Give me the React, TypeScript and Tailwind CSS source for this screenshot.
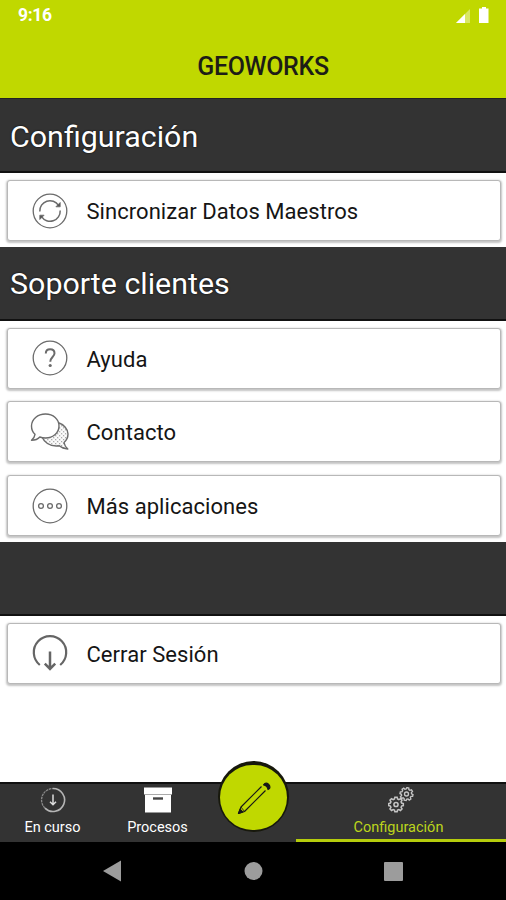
import type { ReactNode } from 'react';

function SyncIcon() {
  return (
    <svg viewBox="0 0 40 40" className="w-10 h-10" fill="none" stroke="#6b6b6b" strokeWidth="1.3">
      <circle cx="20" cy="20" r="16.8" />
      <path d="M9.8 20.5A10.2 10.2 0 0 1 28.5 14.3M30.2 19.5A10.2 10.2 0 0 1 11.5 25.7" strokeWidth="1.5" />
      <path d="M30.2 11.500v4.300h-4.300zM9.800 28.500v-4.300h4.300z" fill="#555" strokeWidth="0.8" />
    </svg>
  );
}

function HelpIcon() {
  return (
    <svg viewBox="0 0 40 40" className="w-10 h-10" fill="none" stroke="#6b6b6b" strokeWidth="1.3">
      <circle cx="20" cy="20" r="16.8" />
      <path d="M15.8 15.5c0-2.8 1.8-4.3 4.3-4.3s4.4 1.6 4.4 4.1c0 3.6-4.2 4-4.2 8.4" strokeWidth="2" />
      <circle cx="20.2" cy="27.5" r="1.6" fill="#6b6b6b" stroke="none" />
    </svg>
  );
}

function ChatIcon() {
  return (
    <svg viewBox="0 0 40 40" className="w-10 h-10" fill="none" stroke="#6b6b6b" strokeWidth="1.4" strokeLinejoin="round">
      <defs>
        <pattern id="dots" width="2.8" height="2.8" patternUnits="userSpaceOnUse" patternTransform="rotate(45)">
          <circle cx="1.4" cy="1.4" r="0.7" fill="#888" stroke="none" />
        </pattern>
      </defs>
      <path d="M28 10.5c6 2 10 6.700 10 11.500 0 3.600-1.500 6.400-4 8.500.4 2.500 1.700 4.500 3.800 6.500-3.500-.2-6.400-1.300-8.500-3.200-8 1-14.500-2.500-17.800-9.500z" fill="url(#dots)" />
      <path d="M15.5 2c7.800 0 13.500 5.200 13.500 12s-5.700 12-13.500 12c-2 0-4-.3-5.700-1-2 2.300-5 3.300-8.300 3.300 2-1.700 3.200-3.600 3.500-6-2.300-2-3.500-4.900-3.500-8.300 0-6.800 6.200-12 14-12z" fill="#fff" />
    </svg>
  );
}

function MoreIcon() {
  return (
    <svg viewBox="0 0 40 40" className="w-10 h-10" fill="none" stroke="#6b6b6b" strokeWidth="1.3">
      <circle cx="20" cy="20" r="16.8" />
      <circle cx="11" cy="20" r="2.4" />
      <circle cx="20" cy="20" r="2.4" />
      <circle cx="29" cy="20" r="2.4" />
    </svg>
  );
}

function LogoutIcon() {
  return (
    <svg viewBox="0 0 40 40" className="w-10 h-10" fill="none" stroke="#656565" strokeWidth="2.2">
      <path d="M9.8 32A16.2 16.2 0 1 1 30.2 32" />
      <path d="M20 18.5v17M14.8 30.7l5.2 5.300 5.200-5.300" strokeWidth="2.5" />
    </svg>
  );
}

function DownloadIcon() {
  return (
    <svg viewBox="0 0 26 26" className="w-[26px] h-[26px]" fill="none" stroke="#b5b5b5">
      <path d="M13 1.5a11.5 11.5 0 1 1-8.1 19.6" strokeWidth="1.6" />
      <path d="M4.9 21.1A11.5 11.5 0 0 1 13 1.5" strokeWidth="1.3" strokeDasharray="2.5 .7" stroke="#8b8b8b" />
      <path d="M13 7.5v10M10 14.8l3 3 3-3" stroke="#ddd" strokeWidth="1.5" />
    </svg>
  );
}

function BoxIcon() {
  return (
    <svg viewBox="0 0 30 26" className="w-[30px] h-[26px]">
      <path d="M1 .5h28v7H1z" fill="#fff" />
      <path d="M2 8h26v17.5H2z" fill="#fff" />
      <path d="M2 7.5h26" stroke="#aaa" />
      <path d="M10 11.5h10" stroke="#444" strokeWidth="2.4" />
    </svg>
  );
}

const gear = 'M-1.3-7.5h2.6l.5 2 1.5.7 1.900-1.100 1.800 1.800-1.100 1.900.6 1.500 2 .5v2.400l-2 .5-.6 1.500 1.100 1.900-1.800 1.800-1.900-1.100-1.500.6-.5 2h-2.600l-.5-2-1.500-.6-1.900 1.100-1.800-1.800 1.100-1.900-.6-1.500-2-.5v-2.400l2-.5.6-1.500-1.100-1.900 1.800-1.800 1.900 1.100 1.500-.7z';

function GearsIcon() {
  return (
    <svg viewBox="0 0 26 26" className="ml-1 w-[26px] h-[26px]" fill="none" stroke="#c4c4c4" strokeWidth="1.8">
      <g transform="translate(8 17.5) scale(.86)">
        <path d={gear} transform="translate(0 -.9)" />
        <circle r="2.4" />
      </g>
      <g transform="translate(18.500 7) scale(.76)">
        <path d={gear} transform="rotate(12) translate(0 -.9)" />
        <circle r="2.6" />
      </g>
    </svg>
  );
}

function PencilIcon() {
  return (
    <svg viewBox="0 0 34 34" className="w-[34px] h-[34px]" fill="none" stroke="#171717" strokeWidth="1.2" strokeLinejoin="round">
      <path d="M24.5 5.500L4 26 1.500 32.500l6-2L28.500 9.500" />
      <path d="M27.5 2.800c2.500-1.800 6.500 1.600 5 4.700l-1.500 1c-.4-2.500-2-4.300-4.500-4.700z" fill="#171717" />
      <path d="M3.200 28.300l-1.700 4.200 4.200-1.500z" fill="#171717" />
      <path d="M4 26l3.500 4.500" strokeWidth="0.8" />
    </svg>
  );
}

function Section({ title }: { title?: string }) {
  return (
    <div className="h-[74px] shrink-0 bg-[#333333] border-b-2 border-[#111111] px-2.5 flex items-center">
      {title && <h2 className="text-[30.4px] leading-none text-white pt-1 [text-shadow:0_0_2px_#000]">{title}</h2>}
    </div>
  );
}

function Row({ icon, label }: { icon: ReactNode; label: string }) {
  return (
    <div className="h-[73.7px] shrink-0 pt-[7px] pl-[7px] pr-[5px]">
      <button className="w-full h-[61px] bg-white border border-[#b8b8b8] rounded-[3px] shadow-[0_1px_2px_1px_#c4c4c4] flex items-center gap-[17px] pl-[21.5px]">
        {icon}
        <span className="text-[22px] tracking-[0.05px] leading-none text-[#151515] pt-[3px]">{label}</span>
      </button>
    </div>
  );
}

export default function App() {
  return (
    <div className="w-[506px] h-[900px] overflow-hidden bg-white flex flex-col font-[Roboto,sans-serif]">
      {/* Header */}
      <header className="h-[99px] shrink-0 bg-[#c0d800] border-b border-[#222222]">
        <div className="h-8 flex items-center justify-between pl-[18px] pr-4">
          <span className="text-[17.5px] tracking-[-0.3px] font-bold text-white leading-none">9:16</span>
          <svg viewBox="0 0 36 18" className="w-9 h-[18px]">
            <path d="M2 16L16 2v14z" fill="#fff" opacity=".4" />
            <path d="M2 16l9-9v9z" fill="#fff" />
            <path d="M28 0h4v1.5h2.500V16H25V1.500h3z" fill="#fff" />
          </svg>
        </div>
        <h1 className="pt-[22px] pl-5 text-center text-[25px] tracking-[-0.35px] leading-none font-medium text-[#1d1d16]">GEOWORKS</h1>
      </header>

      <main className="flex-1 min-h-0 flex flex-col">
        <Section title="Configuración" />
        <Row icon={<SyncIcon />} label="Sincronizar Datos Maestros" />
        <Section title="Soporte clientes" />
        <Row icon={<HelpIcon />} label="Ayuda" />
        <Row icon={<ChatIcon />} label="Contacto" />
        <Row icon={<MoreIcon />} label="Más aplicaciones" />
        <Section />
        <Row icon={<LogoutIcon />} label="Cerrar Sesión" />
      </main>

      {/* Tabs */}
      <nav className="relative h-[60px] shrink-0 bg-[#333333] border-t-2 border-[#111111] flex text-[14.5px] leading-none text-white">
        <button className="w-[105px] pt-[3px] flex flex-col items-center gap-2">
          <DownloadIcon />
          <span>En curso</span>
        </button>
        <button className="w-[105px] pt-[3px] flex flex-col items-center gap-2">
          <BoxIcon />
          <span>Procesos</span>
        </button>
        <button className="ml-[86px] w-[210px] pt-[3px] pr-[5px] border-b-[3px] border-[#b5cc0c] flex flex-col items-center gap-2 text-[#bdd51c]">
          <GearsIcon />
          <span>Configuración</span>
        </button>
        <button className="absolute left-[218px] top-[-23px] w-[71px] h-[71px] rounded-full bg-[#17180c] px-0.5 pt-1 pb-0.5">
          <span className="w-full h-full rounded-full bg-[#c0d800] flex items-center justify-center">
            <PencilIcon />
          </span>
        </button>
      </nav>

      {/* System buttons */}
      <footer className="h-[58px] shrink-0 bg-black">
        <svg viewBox="0 0 506 58" className="w-full h-full" fill="#9c9c9c">
          <path d="M103 29l18-10.5v21z" />
          <circle cx="253.5" cy="29" r="9" />
          <rect x="384" y="20" width="19" height="19" rx="1" />
        </svg>
      </footer>
    </div>
  );
}
